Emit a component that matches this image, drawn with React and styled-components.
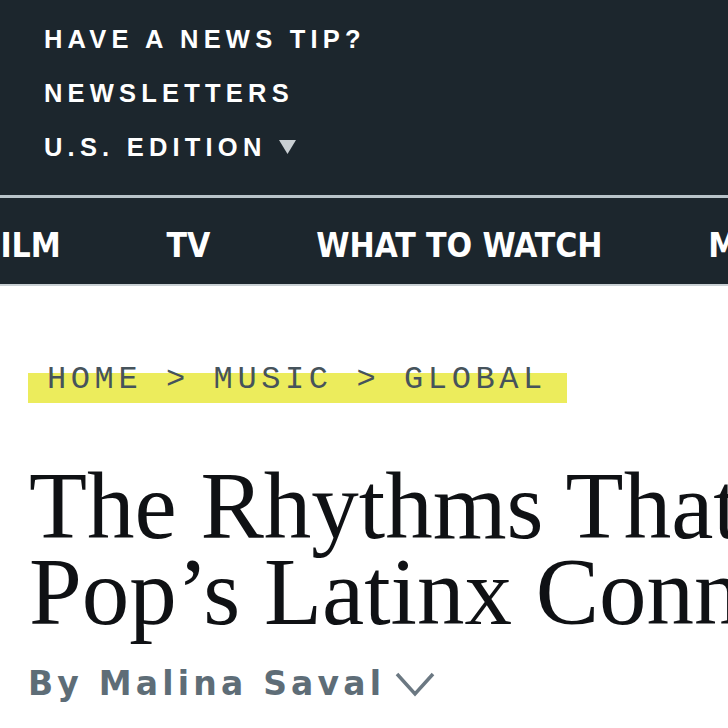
import styled, { createGlobalStyle } from "styled-components";

const GlobalStyle = createGlobalStyle`
  html, body {
    margin: 0;
    padding: 0;
    background: #ffffff;
    overflow: hidden;
  }
  * { box-sizing: border-box; }
`;

const topLinks = ["HAVE A NEWS TIP?", "NEWSLETTERS"];
const navItems = ["FILM", "TV", "WHAT TO WATCH", "MUSIC"];

export default function App() {
  return (
    <Page>
      <GlobalStyle />
      <Header>
        <TopLinks>
          {topLinks.map((item) => (
            <TopLink key={item}>{item}</TopLink>
          ))}
          <TopLink>
            U.S. EDITION
            <Caret viewBox="0 0 17 14">
              <path d="M0 0 H17 L8.5 14 Z" fill="#c9cfd3" />
            </Caret>
          </TopLink>
        </TopLinks>
      </Header>
      <Nav>
        <NavTrack>
          {navItems.map((item) => (
            <NavItem key={item}>{item}</NavItem>
          ))}
        </NavTrack>
      </Nav>
      <Article>
        <Crumbs>
          <Highlight>HOME &gt; MUSIC &gt; GLOBAL</Highlight>
        </Crumbs>
        <Title>
          <TitleLine>The Rhythms That Define K-</TitleLine>
          <TitleLine>Pop’s Latinx Connection</TitleLine>
        </Title>
        <Byline>
          By Malina Saval
          <Chevron viewBox="0 0 42 26">
            <path d="M3 3 L21 23 L39 3" fill="none" stroke="#6b7882" strokeWidth="3.5" />
          </Chevron>
        </Byline>
      </Article>
    </Page>
  );
}

const Page = styled.div`
  width: 728px;
  overflow: hidden;
`;

const Header = styled.header`
  background: #1c262d;
  padding: 12px 0 21px 44px;
  border-bottom: 3px solid #b8c3c9;
`;

const TopLinks = styled.div`
  display: flex;
  flex-direction: column;
`;

const TopLink = styled.a`
  display: flex;
  align-items: center;
  height: 54px;
  font-family: "Liberation Sans", Arial, sans-serif;
  font-weight: 700;
  font-size: 25.5px;
  letter-spacing: 5.2px;
  color: #ffffff;
`;

const Caret = styled.svg`
  width: 17px;
  height: 14px;
  margin-left: 12px;
`;

const Nav = styled.nav`
  background: #1c262d;
  height: 88px;
  border-bottom: 2px solid #c9d0d4;
  overflow: hidden;
`;

const NavTrack = styled.ul`
  list-style: none;
  margin: 0 0 0 -20px;
  padding: 8px 0 0;
  height: 100%;
  display: flex;
  align-items: center;
  gap: 106px;
  white-space: nowrap;
`;

const NavItem = styled.li`
  font-family: "Liberation Sans Narrow", "DejaVu Sans Condensed", sans-serif;
  font-weight: 700;
  font-size: 33.5px;
  letter-spacing: -0.1px;
  color: #ffffff;
`;

const Article = styled.main`
  padding: 74px 0 0 28px;
`;

const Crumbs = styled.div`
  display: flex;
`;

const Highlight = styled.span`
  display: inline-block;
  padding: 0 20px 0 19px;
  height: 43px;
  line-height: 40px;
  font-family: "Liberation Mono", "DejaVu Sans Mono", monospace;
  font-size: 32px;
  letter-spacing: 4.6px;
  color: #46535b;
  background: linear-gradient(to bottom, transparent 30%, #ecec5c 30%, #ecec5c 100%);
`;

const Title = styled.h1`
  margin: 60px 0 0 0;
  font-family: "Liberation Serif", "Times New Roman", serif;
  font-weight: 400;
  font-size: 95px;
  line-height: 86px;
  color: #0f1114;
`;

const TitleLine = styled.span`
  display: block;
  white-space: nowrap;
  margin-left: 1px;
`;

const Byline = styled.div`
  display: flex;
  align-items: center;
  margin-top: 29px;
  font-family: "DejaVu Sans", Verdana, sans-serif;
  font-weight: 700;
  font-size: 33px;
  letter-spacing: 4.2px;
  color: #5e6d77;
  white-space: nowrap;
`;

const Chevron = styled.svg`
  width: 42px;
  height: 26px;
  margin-left: 9px;
`;
